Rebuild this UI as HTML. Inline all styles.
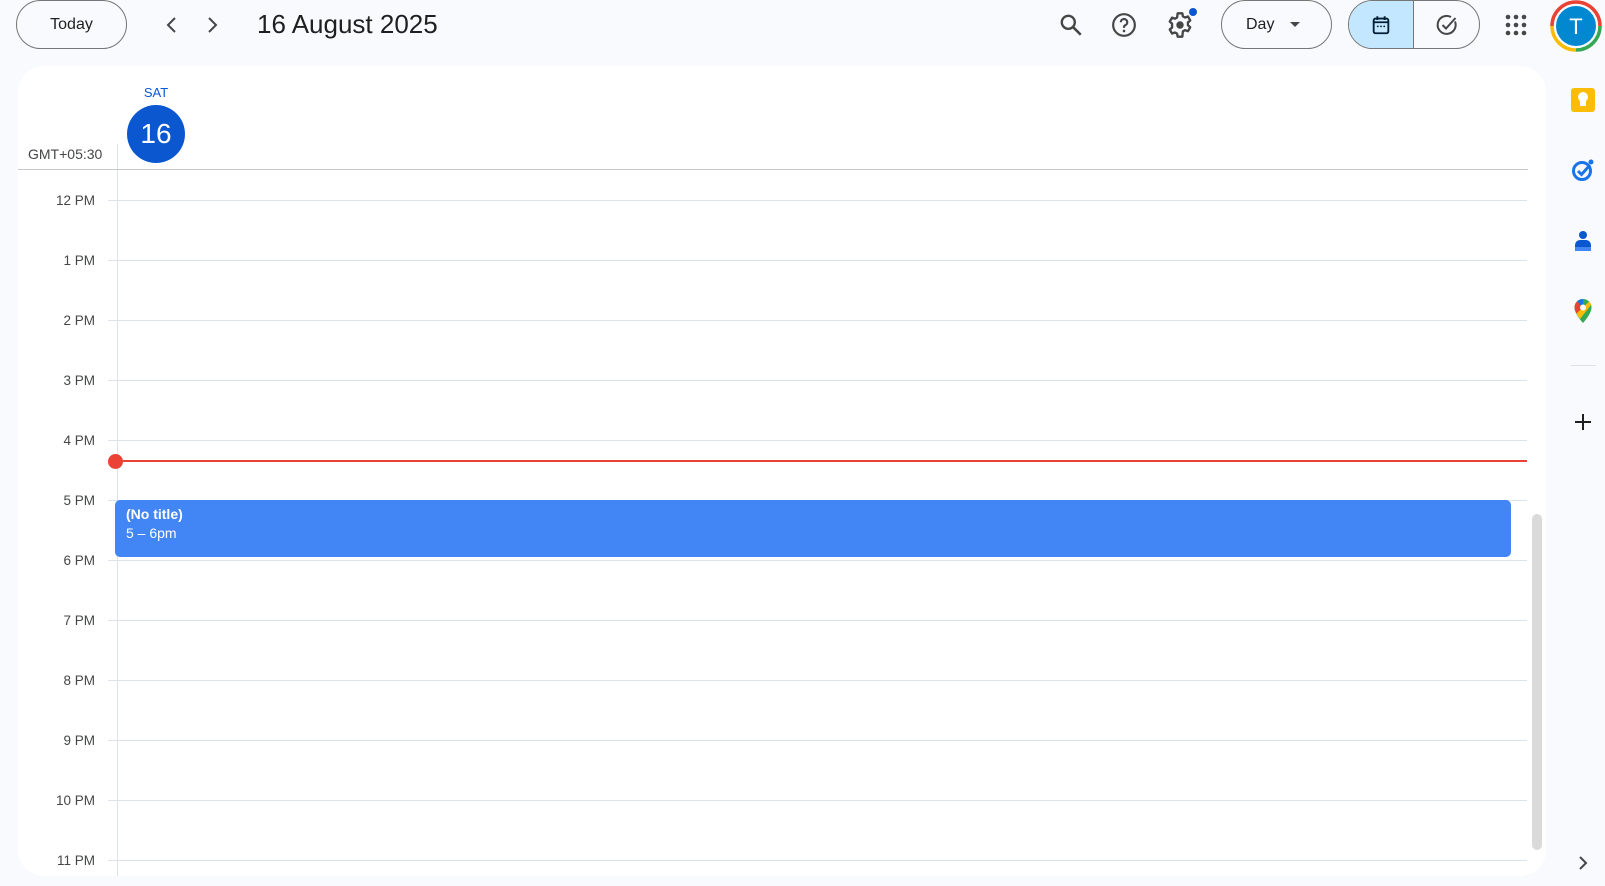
<!DOCTYPE html>
<html><head><meta charset="utf-8"><style>
*{box-sizing:border-box;margin:0;padding:0}
body{width:1605px;height:886px;background:#f8fafd;font-family:"Liberation Sans",sans-serif;position:relative;overflow:hidden;color:#1f1f1f}
.abs{position:absolute}
.btn{position:absolute;border:1px solid #747775;border-radius:25px;height:49px;top:0;display:flex;align-items:center;justify-content:center;font-size:16px;color:#1f1f1f}
.card{position:absolute;left:18px;top:66px;width:1528px;height:810px;background:#fff;border-radius:26px}
.hl{position:absolute;left:108px;width:1419px;height:1px;background:#dde3ea}
.lbl{position:absolute;left:15px;width:80px;text-align:right;font-size:13.5px;color:#444746}
</style></head><body>
<div class="btn" style="left:16px;width:111px;font-weight:500">Today</div>
<svg class="abs" style="left:162px;top:15px" width="20" height="20" viewBox="0 0 20 20"><path d="M13 3L6 10l7 7" stroke="#444746" stroke-width="2" fill="none"/></svg>
<svg class="abs" style="left:202px;top:15px" width="20" height="20" viewBox="0 0 20 20"><path d="M7 3l7 7-7 7" stroke="#444746" stroke-width="2" fill="none"/></svg>
<div class="abs" style="left:257px;top:9px;font-size:26px;color:#1f1f1f">16 August 2025</div>
<svg class="abs" style="left:1058px;top:12px" width="26" height="26" viewBox="0 0 24 24"><circle cx="9.5" cy="9.5" r="6" stroke="#444746" stroke-width="2.2" fill="none"/><path d="M14 14l7 7" stroke="#444746" stroke-width="2.4"/></svg>
<svg class="abs" style="left:1111px;top:12px" width="26" height="26" viewBox="0 0 24 24"><circle cx="12" cy="12" r="10" stroke="#444746" stroke-width="2" fill="none"/><path d="M9 9.5a3 3 0 1 1 4 2.8c-.8.4-1 1-1 1.7v.6" stroke="#444746" stroke-width="2" fill="none"/><circle cx="12" cy="17.5" r="1.2" fill="#444746"/></svg>
<svg class="abs" style="left:1166px;top:11px" width="28" height="28" viewBox="0 0 24 24"><path d="M10 2h4l.5 2.6 1.8 1 2.5-.9 2 3.4-2 1.7v2.4l2 1.7-2 3.4-2.5-.9-1.8 1L14 22h-4l-.5-2.6-1.8-1-2.5.9-2-3.4 2-1.7V10.8l-2-1.7 2-3.4 2.5.9 1.8-1z" stroke="#444746" stroke-width="2" fill="none" stroke-linejoin="round"/><circle cx="12" cy="12" r="3.2" fill="#444746"/></svg>
<div class="abs" style="left:1189px;top:8px;width:8px;height:8px;border-radius:50%;background:#0b57d0"></div>
<div class="btn" style="left:1221px;width:111px;justify-content:flex-start;padding-left:24px">Day<span style="margin-left:16px;border-left:5px solid transparent;border-right:5px solid transparent;border-top:5px solid #444746"></span></div>
<div class="btn" style="left:1348px;width:132px;overflow:hidden;justify-content:flex-start">
<div style="width:66px;height:100%;background:#c2e7ff;border-right:1px solid #747775;display:flex;align-items:center;justify-content:center"><svg width="22" height="22" viewBox="0 0 24 24"><rect x="4" y="5" width="16" height="16" rx="2" stroke="#001d35" stroke-width="2" fill="none"/><path d="M4 9h16M8 2.5v4M16 2.5v4" stroke="#001d35" stroke-width="2"/><circle cx="8.5" cy="13.5" r="1" fill="#001d35"/><circle cx="12" cy="13.5" r="1" fill="#001d35"/><circle cx="15.5" cy="13.5" r="1" fill="#001d35"/></svg></div>
<div style="width:66px;display:flex;justify-content:center"><svg width="24" height="24" viewBox="0 0 24 24"><path d="M20 8.5A9 9 0 1 1 16 4" stroke="#444746" stroke-width="2" fill="none"/><path d="M7.5 12l3.5 3.5L20.5 5" stroke="#444746" stroke-width="2" fill="none"/></svg></div></div>
<svg class="abs" style="left:1505px;top:14px" width="22" height="22" viewBox="0 0 22 22"><g fill="#444746"><circle cx="3" cy="3" r="2.3"/><circle cx="11" cy="3" r="2.3"/><circle cx="19" cy="3" r="2.3"/><circle cx="3" cy="11" r="2.3"/><circle cx="11" cy="11" r="2.3"/><circle cx="19" cy="11" r="2.3"/><circle cx="3" cy="19" r="2.3"/><circle cx="11" cy="19" r="2.3"/><circle cx="19" cy="19" r="2.3"/></g></svg>
<svg class="abs" style="left:1550px;top:0px" width="52" height="52" viewBox="0 0 52 52"><path d="M26 2A24 24 0 0 1 50 26" stroke="#ea4335" stroke-width="3.5" fill="none"/><path d="M2 26A24 24 0 0 1 26 2" stroke="#ea4335" stroke-width="3.5" fill="none"/><path d="M50 26A24 24 0 0 1 26 50" stroke="#34a853" stroke-width="3.5" fill="none"/><path d="M26 50A24 24 0 0 1 2 26" stroke="#fbbc04" stroke-width="3.5" fill="none"/><circle cx="26" cy="26" r="20" fill="#0288d1"/><text x="26" y="34" text-anchor="middle" font-size="22" fill="#fff" font-family="Liberation Sans">T</text></svg>

<div class="card">
<div class="abs" style="left:112px;top:19px;width:52px;text-align:center;font-size:13px;color:#0b57d0;font-weight:500">SAT</div>
<div class="abs" style="left:109px;top:39px;width:58px;height:58px;border-radius:50%;background:#0b57d0;color:#fff;font-size:28px;display:flex;align-items:center;justify-content:center">16</div>
<div class="abs" style="left:10px;top:80px;font-size:14px;color:#444746">GMT+05:30</div>
<div class="abs" style="left:99px;top:78px;width:1px;height:732px;background:#dde3ea"></div>
<div class="abs" style="left:0;top:103px;width:1510px;height:1px;background:#c7c7c7"></div>
</div>
<div class="hl" style="top:200px"></div><div class="hl" style="top:260px"></div><div class="hl" style="top:320px"></div><div class="hl" style="top:380px"></div><div class="hl" style="top:440px"></div><div class="hl" style="top:500px"></div><div class="hl" style="top:560px"></div><div class="hl" style="top:620px"></div><div class="hl" style="top:680px"></div><div class="hl" style="top:740px"></div><div class="hl" style="top:800px"></div><div class="hl" style="top:860px"></div>
<div class="lbl" style="top:193px">12 PM</div><div class="lbl" style="top:253px">1 PM</div><div class="lbl" style="top:313px">2 PM</div><div class="lbl" style="top:373px">3 PM</div><div class="lbl" style="top:433px">4 PM</div><div class="lbl" style="top:493px">5 PM</div><div class="lbl" style="top:553px">6 PM</div><div class="lbl" style="top:613px">7 PM</div><div class="lbl" style="top:673px">8 PM</div><div class="lbl" style="top:733px">9 PM</div><div class="lbl" style="top:793px">10 PM</div><div class="lbl" style="top:853px">11 PM</div>
<div class="abs" style="left:116px;top:460px;width:1411px;height:2px;background:#ea4335"></div>
<div class="abs" style="left:108px;top:454px;width:15px;height:15px;border-radius:50%;background:#ea4335"></div>
<div class="abs" style="left:115px;top:500px;width:1396px;height:57px;background:#4285f4;border-radius:5px;color:#fff;font-size:14px;padding:5px 11px;line-height:19px"><div style="font-weight:600">(No title)</div><div>5 – 6pm</div></div>
<div class="abs" style="left:1532px;top:514px;width:10px;height:336px;border-radius:5px;background:#dadada"></div>

<div class="abs" style="left:1571px;top:88px;width:24px;height:24px;border-radius:3px;background:#fbbc04"><div style="position:absolute;left:7px;top:4px;width:10px;height:10px;border-radius:50%;background:#fff"></div><div style="position:absolute;left:9px;top:13px;width:6px;height:5px;background:#fff"></div></div>
<svg class="abs" style="left:1571px;top:158px" width="24" height="24" viewBox="0 0 24 24"><circle cx="11" cy="13" r="8.5" stroke="#1a73e8" stroke-width="3" fill="none"/><path d="M7 13l3.5 3.5L19 7" stroke="#1a73e8" stroke-width="3" fill="none"/><circle cx="20" cy="4" r="2.5" fill="#1a73e8"/></svg>
<svg class="abs" style="left:1572px;top:229px" width="22" height="24" viewBox="0 0 22 24"><circle cx="11" cy="6" r="4" fill="#0b57d0"/><path d="M3 22v-6a5 5 0 0 1 5-5h6a5 5 0 0 1 5 5v6z" fill="#0b57d0"/><path d="M3 22v-4h16v4z" fill="#4285f4"/></svg>
<svg class="abs" style="left:1573px;top:298px" width="20" height="26" viewBox="0 0 20 26"><path d="M10 1a8.5 8.5 0 0 0-8.5 8.5C1.5 16 10 25 10 25s8.5-9 8.5-15.5A8.5 8.5 0 0 0 10 1z" fill="#34a853"/><path d="M10 1a8.5 8.5 0 0 0-6 2.5l6 6z" fill="#1a73e8"/><path d="M4 3.5a8.5 8.5 0 0 0-2.5 6c0 2 .8 4 2 6L10 9.5z" fill="#ea4335"/><path d="M10 9.5l-6.5 6c1 2 2.5 4 3.5 5.5L18 7a8.5 8.5 0 0 0-2-3.5z" fill="#fbbc04"/><circle cx="10" cy="9.5" r="3" fill="#fff"/></svg>
<div class="abs" style="left:1571px;top:365px;width:25px;height:1px;background:#dde3ea"></div>
<svg class="abs" style="left:1573px;top:412px" width="20" height="20" viewBox="0 0 20 20"><path d="M10 2v16M2 10h16" stroke="#1f1f1f" stroke-width="2"/></svg>
<svg class="abs" style="left:1576px;top:855px" width="14" height="16" viewBox="0 0 14 16"><path d="M4 2l6 6-6 6" stroke="#444746" stroke-width="2" fill="none"/></svg>
</body></html>
